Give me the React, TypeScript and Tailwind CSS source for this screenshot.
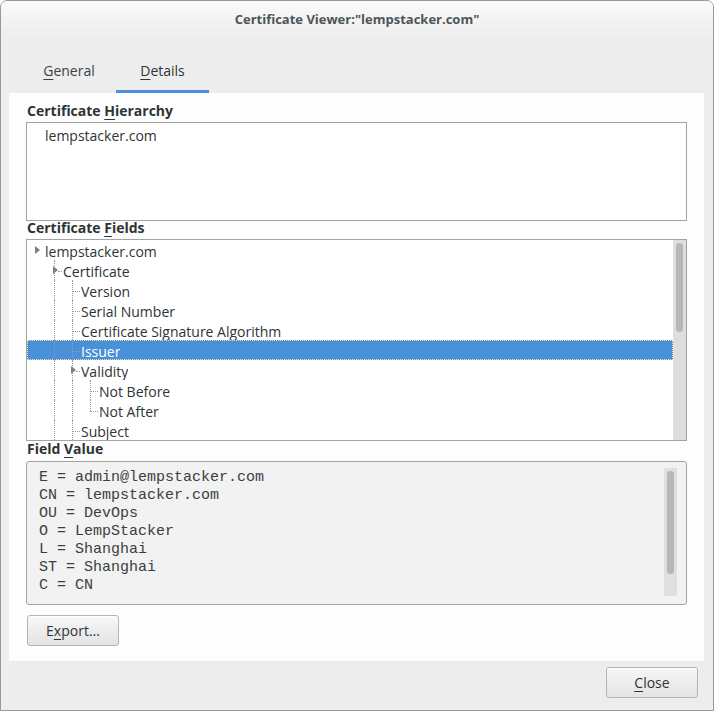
import React from "react";

type Row = {
  label: string;
  level: number;
  expander?: boolean;
  selected?: boolean;
  guides: number[];
  half?: number;
  hline?: [number, number];
};

const rows: Row[] = [
  { label: "lempstacker.com", level: 0, expander: true, guides: [] },
  { label: "Certificate", level: 1, expander: true, guides: [27], hline: [27, 35] },
  { label: "Version", level: 2, guides: [27, 45], hline: [45, 53] },
  { label: "Serial Number", level: 2, guides: [27, 45], hline: [45, 53] },
  { label: "Certificate Signature Algorithm", level: 2, guides: [27, 45], hline: [45, 53] },
  { label: "Issuer", level: 2, selected: true, guides: [27, 45], hline: [45, 53] },
  { label: "Validity", level: 2, expander: true, guides: [27, 45], hline: [45, 53] },
  { label: "Not Before", level: 3, guides: [27, 45, 63], hline: [63, 71] },
  { label: "Not After", level: 3, guides: [27, 45], half: 63, hline: [63, 71] },
  { label: "Subject", level: 2, guides: [27, 45], hline: [45, 53] },
];

const fieldLines = [
  "E = admin@lempstacker.com",
  "CN = lempstacker.com",
  "OU = DevOps",
  "O = LempStacker",
  "L = Shanghai",
  "ST = Shanghai",
  "C = CN",
];

function Triangle() {
  return (
    <span className="block w-0 h-0 border-y-[4px] border-y-transparent border-l-[5px] border-l-[#7f7f7f]" />
  );
}

function TreeRow({ row }: { row: Row }) {
  const textLeft = 18 + row.level * 18;
  const expLeft = 8 + row.level * 18;
  return (
    <div
      className={
        "relative h-[20px] " +
        (row.selected
          ? "bg-[#4a90d9] text-white outline outline-1 outline-dotted outline-[#e6e3a8] -outline-offset-1"
          : "text-[#2e3436]")
      }
    >
      {row.guides.map((g) => (
        <span
          key={g}
          className="absolute top-0 bottom-0 border-l border-dotted border-[#9a9a9a]"
          style={{ left: g }}
        />
      ))}
      {row.half !== undefined && (
        <span
          className="absolute top-0 h-[11px] border-l border-dotted border-[#9a9a9a]"
          style={{ left: row.half }}
        />
      )}
      {row.hline && !row.expander && (
        <span
          className="absolute top-[11px] border-t border-dotted border-[#9a9a9a]"
          style={{ left: row.hline[0], width: row.hline[1] - row.hline[0] }}
        />
      )}
      {row.expander && row.level > 0 && (
        <span
          className="absolute top-[11px] border-t border-dotted border-[#9a9a9a]"
          style={{ left: expLeft + 5, width: textLeft - expLeft - 6 }}
        />
      )}
      {row.expander && (
        <span className="absolute top-[6px]" style={{ left: expLeft }}>
          <Triangle />
        </span>
      )}
      <span
        className="absolute top-[3px] h-[17px] leading-[17px] whitespace-nowrap overflow-hidden"
        style={{ left: textLeft }}
      >
        {row.label}
      </span>
    </div>
  );
}

function Button({ children, className = "" }: { children: React.ReactNode; className?: string }) {
  return (
    <div
      className={
        "h-[31px] rounded-[3px] border border-[#b4b4b4] bg-gradient-to-b from-[#f7f7f7] to-[#e3e3e3] flex items-center justify-center text-[#2e3436] text-[14px] shadow-[inset_0_1px_0_#ffffff] " +
        className
      }
    >
      {children}
    </div>
  );
}

export default function App() {
  return (
    <div
      className="w-[714px] h-[711px] border border-[#999999] rounded-t-[7px] bg-[#ededed] flex flex-col overflow-hidden text-[#2e3436]"
      style={{ fontFamily: '"Open Sans", "Noto Sans", sans-serif' }}
    >
      {/* Title bar */}
      <div className="h-[37px] shrink-0 flex items-center justify-center bg-gradient-to-b from-[#fafafa] to-[#ededed]">
        <span className="text-[13px] font-bold text-[#4d5558]">
          Certificate Viewer:"lempstacker.com"
        </span>
      </div>

      {/* Tabs */}
      <div className="h-[55px] shrink-0 flex items-end pl-[21px]">
        <div className="w-[94px] h-[44px] flex items-start justify-center pt-[11px] text-[14px] text-[#3b4143]">
          <span>
            <u className="underline-offset-[3px]">G</u>eneral
          </span>
        </div>
        <div className="w-[93px] h-[44px] flex flex-col justify-between text-[14px]">
          <div className="flex justify-center pt-[11px]">
            <span>
              <u className="underline-offset-[3px]">D</u>etails
            </span>
          </div>
          <div className="h-[3px] bg-[#4a90d9]" />
        </div>
      </div>

      {/* Panel */}
      <div className="mx-[8px] w-[695px] h-[568px] shrink-0 bg-[#fdfdfd] pt-[11px] pl-[17px] pr-[17px] flex flex-col">
        <div className="h-[18px] leading-[14px] text-[14px] font-bold pl-[1px]">
          Certificate <u className="underline-offset-[3px]">H</u>ierarchy
        </div>
        <div className="h-[99px] border border-[#a3a3a3] bg-white pt-[3px] pl-[18px]">
          <div className="h-[20px] leading-[20px] text-[14px]">lempstacker.com</div>
        </div>

        <div className="h-[18px] leading-[14px] text-[14px] font-bold pl-[1px]">
          Certificate <u className="underline-offset-[3px]">F</u>ields
        </div>
        <div className="h-[202px] border border-[#a3a3a3] bg-white flex overflow-hidden">
          <div className="flex-1 text-[14px]">
            {rows.map((r) => (
              <TreeRow key={r.label} row={r} />
            ))}
          </div>
          <div className="w-[13px] bg-[#dedede] pt-[3px] flex justify-center">
            <div className="w-[7px] h-[89px] rounded-full bg-[#b7b7b7]" />
          </div>
        </div>

        <div className="h-[20px] pt-[1px] leading-[14px] text-[14px] font-bold pl-[1px]">
          Field <u className="underline-offset-[3px]">V</u>alue
        </div>
        <div className="h-[144px] border border-[#a3a3a3] rounded-[3px] bg-[#f2f2f2] flex pt-[6px] pr-[9px]">
          <div
            className="flex-1 pl-[12px] pt-[1px] text-[15px] leading-[18px] text-[#3a3f41]"
            style={{ fontFamily: '"Liberation Mono", monospace' }}
          >
            {fieldLines.map((l) => (
              <div key={l} className="whitespace-pre">
                {l}
              </div>
            ))}
          </div>
          <div className="w-[13px] h-[128px] bg-[#dfdfdf] pt-[3px] flex justify-center">
            <div className="w-[7px] h-[103px] rounded-full bg-[#b7b7b7]" />
          </div>
        </div>

        <div className="mt-[10px] pl-[1px]">
          <Button className="w-[92px]">
            <span>
              E<u className="underline-offset-[3px]">x</u>port...
            </span>
          </Button>
        </div>
      </div>

      {/* Bottom */}
      <div className="flex justify-end pt-[6px] pr-[15px]">
        <Button className="w-[92px]">
          <span>
            <u className="underline-offset-[3px]">C</u>lose
          </span>
        </Button>
      </div>
    </div>
  );
}
